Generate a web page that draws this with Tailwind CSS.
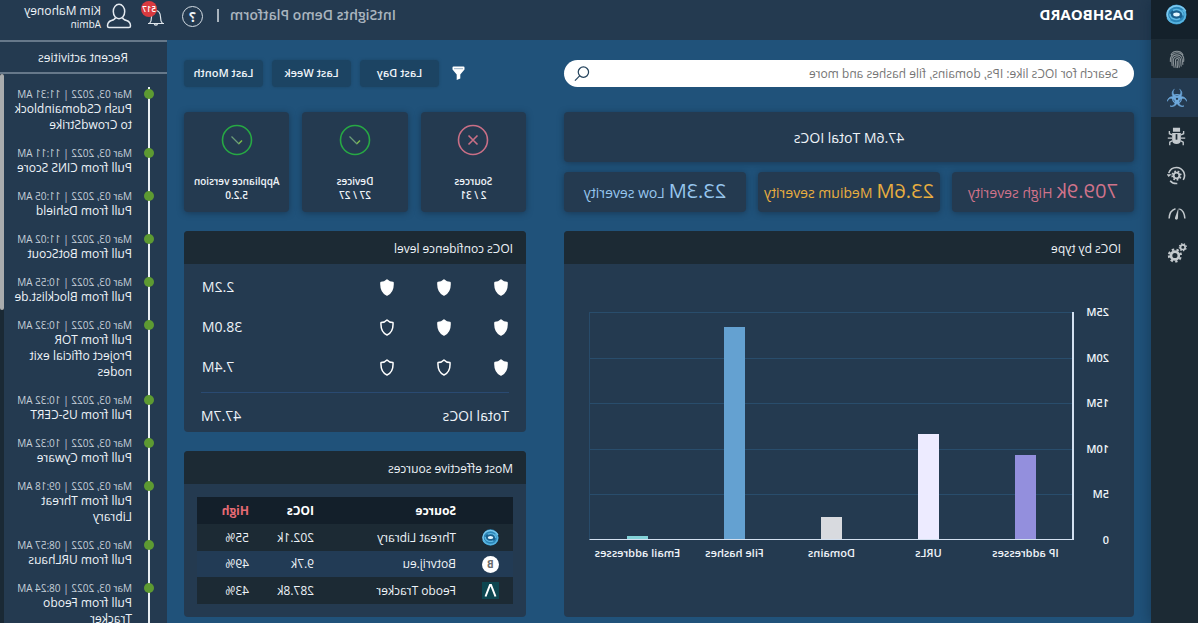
<!DOCTYPE html>
<html lang="en">
<head>
<meta charset="utf-8">
<title>Dashboard</title>
<meta name="viewport" content="width=device-width, initial-scale=1">
<script src="https://cdn.jsdelivr.net/npm/@tailwindcss/browser@4"></script>
</head>
<body class="overflow-hidden bg-[#20527a]">
<svg class="hidden">
  <symbol id="swirl" viewBox="0 0 24 24">
    <circle cx="12" cy="12" r="11.5" fill="#2b86b8"/>
    <path d="M1.6 8.5C4 2.500 13 0 19 4.500c5 4 4.500 11 .5 14" fill="none" stroke="#7cc8ee" stroke-width="2"/>
    <path d="M22.400 15.500C20 21.500 11 24 5 19.500c-4-3.500-4-10 0-13" fill="none" stroke="#58b4e0" stroke-width="2"/>
    <ellipse cx="12" cy="12" rx="7.500" ry="5.500" fill="#1b5f8c"/>
    <path d="M4.500 13c0-6 7-8 11.500-5.500M19.500 11c0 6-7 8-11.500 5.500" fill="none" stroke="#5fb9e4" stroke-width="1.800"/>
    <ellipse cx="12" cy="12" rx="3.800" ry="2.200" fill="#e4f6ff"/>
  </symbol>
  <symbol id="shield" viewBox="0 0 14 17">
    <path d="M7 1C5.600 2.600 3.400 3.600 1 3.600C.6 9.500 2.400 13.800 7 16c4.600-2.200 6.400-6.500 6-12.400C10.600 3.600 8.400 2.600 7 1z" fill="currentColor" stroke="#fff" stroke-width="1.500" stroke-linejoin="round"/>
  </symbol>
  <symbol id="ok" viewBox="0 0 32 32">
    <circle cx="16" cy="16" r="14.500" fill="none" stroke="#27a844" stroke-width="1.600"/>
    <path d="M11 16.500l3.500 3.500" fill="none" stroke="#7fbf4a" stroke-width="1.400"/><path d="M14 20l7.500-7.500" fill="none" stroke="#6b9c78" stroke-width="1.300"/>
  </symbol>
</svg>

<div class="flex h-screen -scale-x-100 overflow-hidden bg-[#20527a] font-['Open_Sans','Noto_Sans',sans-serif] font-medium text-[#eef3f8]">

  <nav aria-label="Main" class="z-10 w-[47px] shrink-0 bg-[#1c2a34] text-[#c3c9cd] shadow-[0_0_14px_rgba(15,40,62,0.6)] *:pr-[5px]">
    <a href="#" aria-label="Home" class="flex h-[39px] items-start justify-center bg-[#14212b] pt-1"><svg class="size-[21px]"><use href="#swirl"/></svg></a>
    <a href="#" aria-label="Threats" class="flex h-[39px] items-center justify-center">
      <svg class="size-[20px]" viewBox="0 0 24 24" fill="none" stroke="#8a9398" stroke-width="1.300" stroke-linecap="round"><path d="M5 6.500C8 1.500 16 1.500 19 6.500M4 15C3 8 7 4.500 12 4.500S20.500 8.500 20 15M5 18.500C5.500 15 4.500 7 12 7s6.500 7 5.800 13M7 20.500C8 16 6 9.300 12 9.300s4.600 7 3.500 12.700M9.200 21.800c1-3 .4-4.800.4-7.300 0-4 4.300-4 4.300-.2 0 3.200-.2 5.500-.8 8M11.700 14.500c.1 3 .1 5-.5 7.800"/></svg></a>
    <a href="#" aria-label="IOCs" aria-current="page" class="flex h-[39px] items-center justify-center bg-[#243a50] text-[#6ea9dc]">
      <svg class="size-[20px]" viewBox="0 0 24 24" fill="currentColor"><g id="hz"><path d="M8.800 1.500A5.900 5.900 0 1 0 15.200 1.500A4.700 4.700 0 1 1 8.800 1.500z" stroke="currentColor" stroke-width=".7"/></g><use href="#hz" transform="rotate(120 12 13)"/><use href="#hz" transform="rotate(240 12 13)"/><circle cx="12" cy="13" r="5.200" fill="none" stroke="currentColor" stroke-width="1.500"/><circle cx="12" cy="13" r="1.300" fill="#243a50"/></svg></a>
    <a href="#" aria-label="Malware" class="flex h-[39px] items-center justify-center">
      <svg class="size-[19px]" viewBox="0 0 24 24"><path d="M7.500 1h9v5h-9zM6.500 7.500h11v9.500c0 2.500-2 4.500-5.500 4.500s-5.500-2-5.500-4.500z" fill="currentColor"/><path d="M6.500 10L3 8.500V5M6.500 14H1M6.500 17.500L3.500 19v4M17.500 10L21 8.500V5M17.500 14H23M17.500 17.500l3 1.500v4" fill="none" stroke="currentColor" stroke-width="1.700"/><path d="M12 9v7" stroke="#1c2a34" stroke-width="2.200"/></svg></a>
    <a href="#" aria-label="Automation" class="flex h-[38px] items-center justify-center">
      <svg class="size-[19px]" viewBox="0 0 24 24" fill="none" stroke="currentColor"><circle cx="12" cy="12" r="3.600" stroke-width="2.400"/><circle cx="12" cy="12" r="5.500" stroke-width="2" stroke-dasharray="2.160 2.160"/><path d="M3.500 17.500A10.200 10.200 0 0 1 12 1.800c4.500 0 8.500 3 9.800 7.200M20 18.500a10.300 10.300 0 0 1-9 3.600" stroke-width="2"/><path d="M18 10.500h6.500L22 14z" fill="currentColor" stroke="none"/></svg></a>
    <a href="#" aria-label="Performance" class="flex h-[39px] items-center justify-center">
      <svg class="size-[18px]" viewBox="0 0 24 24" fill="none" stroke="currentColor" stroke-width="2"><path d="M1.500 18C2 10.500 5 6.500 9 5.200M14 5c5 1.500 8.200 6 8.500 13"/><path d="M10 3.500l4.700 13.500a2 2 0 0 1-3.900 1.100z" fill="currentColor" stroke="none"/></svg></a>
    <a href="#" aria-label="Settings" class="flex h-[39px] items-center justify-center">
      <svg class="size-[20px]" viewBox="0 0 24 24" fill="none" stroke="currentColor"><circle cx="14.500" cy="15" r="4.700" stroke-width="3.200"/><circle cx="14.500" cy="15" r="7.200" stroke-width="2.600" stroke-dasharray="2.830 2.830"/><circle cx="5" cy="5" r="2.800" stroke-width="2"/><circle cx="5" cy="5" r="4.200" stroke-width="1.500" stroke-dasharray="1.650 1.650"/></svg></a>
  </nav>

  <div class="flex min-w-0 flex-1 flex-col">
    <header class="flex h-[40px] shrink-0 items-start bg-[#243a50] pr-[15px] pl-[17px]">
      <h1 class="mr-auto pt-[3px] text-[15px] leading-[22px] font-bold text-white">DASHBOARD</h1>
      <span class="pt-1 text-[14px] leading-[22px] font-semibold text-[#a9b4be]">IntSights Demo Platform</span>
      <span class="mr-[14px] ml-[11px] mt-[9px] h-[13px] w-[2px] bg-[#a9b4be]"></span>
      <button type="button" aria-label="Help" class="mt-[6px] flex size-[21px] items-center justify-center rounded-full border border-[#d5dde4] text-[14px] leading-none font-bold">?</button>
    </header>

    <main class="flex min-h-0 flex-1 gap-[38px] px-[17px] pt-5 pb-[6px]">
      <section class="flex min-w-0 flex-[5] flex-col">
        <label class="flex h-[27px] shrink-0 items-center rounded-full bg-white pr-[10px] pl-4">
          <input type="search" aria-label="Search for IOCs" placeholder="Search for IOCs like: IPs, domains, file hashes and more" class="min-w-0 flex-1 bg-transparent text-[12px] font-normal text-[#555] outline-none placeholder:text-[#757575]">
          <svg class="size-[16px]" viewBox="0 0 17 17" fill="none" stroke="#24435c" stroke-width="1.300"><circle cx="7" cy="6.500" r="5.500"/><path d="M11 10.500l5 5"/></svg>
        </label>
        <div class="mt-[25px] flex h-[50px] shrink-0 items-center justify-center rounded bg-[#243a50] text-[14px] shadow-[0_1px_6px_rgba(20,40,60,0.6)]">47.6M Total IOCs</div>
        <div class="mt-[10px] grid h-[40px] shrink-0 grid-cols-3 gap-3 font-normal whitespace-nowrap">
          <div class="flex items-baseline justify-center gap-1 rounded bg-[#243a50] pt-1 text-[14px] text-[#d0738a] shadow-[0_1px_6px_rgba(20,40,60,0.6)]"><span class="text-[20px]">709.9k</span> High severity</div>
          <div class="flex items-baseline justify-center gap-1 rounded bg-[#243a50] pt-1 text-[14px] text-[#e9ae3f] shadow-[0_1px_6px_rgba(20,40,60,0.6)]"><span class="text-[20px]">23.6M</span> Medium severity</div>
          <div class="flex items-baseline justify-center gap-1 rounded bg-[#243a50] pt-1 text-[14px] text-[#97c6ee] shadow-[0_1px_6px_rgba(20,40,60,0.6)]"><span class="text-[20px]">23.3M</span> Low severity</div>
        </div>
        <article class="mt-[19px] flex min-h-0 flex-1 flex-col overflow-hidden rounded bg-[#243a50]">
          <h2 class="h-[33px] shrink-0 bg-[#1c2a34] px-[13px] text-[12px] leading-[35px]">IOCs by type</h2>
          <div class="flex min-h-0 flex-1 pt-12 pr-[25px] pb-[77px] pl-[25px] text-[11px] leading-4 font-semibold">
            <div class="-my-2 flex w-[35px] flex-col justify-between"><span>25M</span><span>20M</span><span>15M</span><span>10M</span><span>5M</span><span>0</span></div>
            <div class="relative flex-1">
              <div class="absolute inset-0 grid grid-rows-5 *:border-t *:border-[#294d6c]"><i></i><i></i><i></i><i></i><i></i></div>
              <div class="relative grid h-full grid-cols-5 items-end justify-items-center">
                <div class="w-[21px] bg-[#938fdd]" style="height:37.500%"></div>
                <div class="w-[21px] bg-[#edebff]" style="height:46.500%"></div>
                <div class="w-[21px] bg-[#d8dadf]" style="height:10.300%"></div>
                <div class="w-[21px] bg-[#64a1d1]" style="height:93.500%"></div>
                <div class="w-[21px] bg-[#83d2d8]" style="height:1.800%"></div>
              </div>
              <div class="absolute inset-0 border-r border-b border-l-2 border-r-[#284b6a] border-b-[#d3e0f0] border-l-[#d3e0f0]"></div>
              <div class="absolute inset-x-0 top-full grid grid-cols-5 pt-[5px] text-center whitespace-nowrap"><span>IP addresses</span><span>URLs</span><span>Domains</span><span>File hashes</span><span>Email addresses</span></div>
            </div>
          </div>
        </article>
      </section>

      <section class="flex min-w-0 flex-[3] flex-col">
        <div class="flex h-[27px] shrink-0 items-center justify-end gap-[9px] *:[button]:h-[27px] *:[button]:w-[79px] *:[button]:rounded *:[button]:bg-[#1c4463] *:[button]:text-[11px] *:[button]:font-semibold *:[button]:shadow-[0_0_3px_#1c4463]">
          <svg class="mr-auto ml-[61px] h-[15px] w-[13px]" viewBox="0 0 13 15" aria-label="Filter"><path d="M.5 1.500Q.5.500 1.500.500h10q1 0 1 1v2L8.300 8.500V14L4.700 12.500v-4L.5 3.500z" fill="#fff"/><path d="M2 2.700h9" stroke="#8fa9bf" stroke-width=".9"/></svg>
          <button type="button">Last Day</button><button type="button">Last Week</button><button type="button">Last Month</button>
        </div>
        <div class="mt-[25px] grid h-[100px] shrink-0 grid-cols-3 gap-[13px] text-center text-[10px] leading-[14px] font-semibold whitespace-nowrap">
          <div class="flex flex-col items-center rounded bg-[#243a50] pt-3 shadow-[0_1px_6px_rgba(20,40,60,0.6)]"><svg class="mb-[18px] size-8 shrink-0" viewBox="0 0 32 32" fill="none" stroke="#c96f86" stroke-width="1.600"><circle cx="16" cy="16" r="14.500"/><path d="M11.500 11.500l9 9M20.500 11.500l-9 9"/></svg><span>Sources</span><span>2 / 31</span></div>
          <div class="flex flex-col items-center rounded bg-[#243a50] pt-3 shadow-[0_1px_6px_rgba(20,40,60,0.6)]"><svg class="mb-[18px] size-8 shrink-0"><use href="#ok"/></svg><span>Devices</span><span>27 / 27</span></div>
          <div class="flex flex-col items-center rounded bg-[#243a50] pt-3 shadow-[0_1px_6px_rgba(20,40,60,0.6)]"><svg class="mb-[18px] size-8 shrink-0"><use href="#ok"/></svg><span>Appliance version</span><span>5.2.0</span></div>
        </div>

        <article class="mt-[19px] flex h-[201px] shrink-0 flex-col overflow-hidden rounded bg-[#243a50] text-[14px]">
          <h2 class="h-[33px] shrink-0 bg-[#1c2a34] px-[13px] text-[12px] leading-[35px]">IOCs confidence level</h2>
          <ul class="mx-[17px] border-b border-[#2a4a72] pt-[2px] pb-[6px] *:flex *:h-10 *:items-center *:gap-[43px] *:px-px [&_svg]:mt-[3px]">
            <li><svg class="h-[17px] w-[14px] text-white"><use href="#shield"/></svg><svg class="h-[17px] w-[14px] text-white"><use href="#shield"/></svg><svg class="h-[17px] w-[14px] text-white"><use href="#shield"/></svg><span class="ml-auto">2.2M</span></li>
            <li><svg class="h-[17px] w-[14px] text-white"><use href="#shield"/></svg><svg class="h-[17px] w-[14px] text-white"><use href="#shield"/></svg><svg class="h-[17px] w-[14px] text-transparent"><use href="#shield"/></svg><span class="ml-auto">38.0M</span></li>
            <li><svg class="h-[17px] w-[14px] text-white"><use href="#shield"/></svg><svg class="h-[17px] w-[14px] text-transparent"><use href="#shield"/></svg><svg class="h-[17px] w-[14px] text-transparent"><use href="#shield"/></svg><span class="ml-auto">7.4M</span></li>
          </ul>
          <div class="mx-[17px] flex flex-1 items-center justify-between pt-[5px]"><span>Total IOCs</span><span>47.7M</span></div>
        </article>

        <article class="mt-[19px] flex min-h-0 flex-1 flex-col overflow-hidden rounded bg-[#243a50]">
          <h2 class="h-[33px] shrink-0 bg-[#1c2a34] px-[13px] text-[12px] leading-[35px]">Most effective sources</h2>
          <div class="px-[13px] pt-[13px]">
            <table class="w-full table-fixed text-left text-[12px]">
              <thead><tr class="h-[27px] bg-[#131f2a] font-bold text-white"><th class="w-[57px]"></th><th>Source</th><th class="w-[65px]">IOCs</th><th class="w-[52px] text-[#e66a74]">High</th></tr></thead>
              <tbody>
                <tr class="h-[27px] bg-[#1c2a34]"><td><svg class="ml-[14px] size-[17px]"><use href="#swirl"/></svg></td><td>Threat Library</td><td>202.1k</td><td>55%</td></tr>
                <tr class="h-[26px] bg-[#223b55]"><td><span class="ml-[14px] flex size-[17px] items-center justify-center rounded-full bg-white text-[10px] font-bold text-[#6c6c6c]">B</span></td><td>Botvrij.eu</td><td>9.7k</td><td>49%</td></tr>
                <tr class="h-[27px] bg-[#1c2a34]"><td><svg class="ml-[14px] size-[17px]" viewBox="0 0 17 17"><path d="M0 0h17v17H0z" fill="#0d4650"/><path d="M3.500 14.500L8 3h1l4.500 11.500" fill="none" stroke="#fff" stroke-width="2"/></svg></td><td>Feodo Tracker</td><td>287.8k</td><td>43%</td></tr>
              </tbody>
            </table>
          </div>
        </article>
      </section>
    </main>
  </div>

  <aside class="flex w-[167px] shrink-0 flex-col bg-[#243a50]">
    <div class="flex h-[40px] shrink-0 items-start">
      <button type="button" aria-label="Notifications" class="relative mt-[8px] ml-[2px] h-[19px] w-[18px]">
        <svg class="h-[19px] w-[18px]" viewBox="0 0 18 19" fill="none" stroke="#dfe6ec" stroke-width="1.200"><path d="M1 15.500h16M2.500 15.500c1.500-1.500 2-3 2-6.500C4.500 5 6.500 2.500 9 2.500s4.500 2.500 4.500 6.500c0 3.500.5 5 2 6.500M7.500 16a1.700 1.700 0 0 0 3.200 0"/></svg>
        <span class="absolute -top-[7px] left-[8px] flex size-4 items-center justify-center rounded-full bg-[#d93a40] text-[8px] font-semibold text-white">517</span>
      </button>
      <svg class="mt-[3px] ml-[15px] h-[26px] w-[26px]" viewBox="0 0 26 26" fill="none" stroke="#e4eaf0" stroke-width="1.500"><ellipse cx="13" cy="8.500" rx="5.700" ry="7.200"/><path d="M9.500 14.500c-.5 2-1.500 2.300-4 3-3 .8-4 2.500-4 5.500 0 1 .5 1.500 1.500 1.500h20c1 0 1.500-.5 1.500-1.500 0-3-1-4.700-4-5.500-2.500-.7-3.500-1-4-3"/></svg>
      <div class="ml-[5px] pt-1"><p class="text-[12px] leading-[14px]">Kim Mahoney</p><p class="text-[10px] leading-[13px]">Admin</p></div>
    </div>
    <h2 class="h-[34px] shrink-0 border-y-2 border-[#66788a] pl-[39px] text-[12px] leading-[31px]">Recent activities</h2>
    <div class="flex min-h-0 flex-1 overflow-hidden">
      <ol class="relative mt-3 ml-[13px] flex-1 before:absolute before:top-[1px] before:left-[4px] before:h-full before:w-[2px] before:bg-[#e8eef2] *:relative *:mb-3 *:pl-[22px] *:text-[12px] *:leading-4 *:before:absolute *:before:top-[3px] *:before:left-0 *:before:size-[10px] *:before:rounded-full *:before:bg-[#5d9a32] [&_time]:-mb-px [&_time]:block [&_time]:pt-px [&_time]:text-[10px] [&_time]:leading-[15px] [&_time]:text-[#c6d0da]">
        <li><time>Mar 03, 2022 | 11:31 AM</time>Push CSdomainblock<br>to CrowdStrike</li>
        <li><time>Mar 03, 2022 | 11:11 AM</time>Pull from CINS Score</li>
        <li><time>Mar 03, 2022 | 11:05 AM</time>Pull from Dshield</li>
        <li><time>Mar 03, 2022 | 11:02 AM</time>Pull from BotScout</li>
        <li><time>Mar 03, 2022 | 10:55 AM</time>Pull from Blocklist.de</li>
        <li><time>Mar 03, 2022 | 10:32 AM</time>Pull from TOR<br>Project official exit<br>nodes</li>
        <li><time>Mar 03, 2022 | 10:32 AM</time>Pull from US-CERT</li>
        <li><time>Mar 03, 2022 | 10:32 AM</time>Pull from Cyware</li>
        <li><time>Mar 03, 2022 | 09:18 AM</time>Pull from Threat<br>Library</li>
        <li><time>Mar 03, 2022 | 08:57 AM</time>Pull from URLhaus</li>
        <li><time>Mar 03, 2022 | 08:24 AM</time>Pull from Feodo<br>Tracker</li>
      </ol>
      <div class="w-1 shrink-0 bg-[#1a2935]"><div class="h-[43%] rounded bg-[#a9acae]"></div></div>
    </div>
  </aside>
</div>
</body>
</html>
